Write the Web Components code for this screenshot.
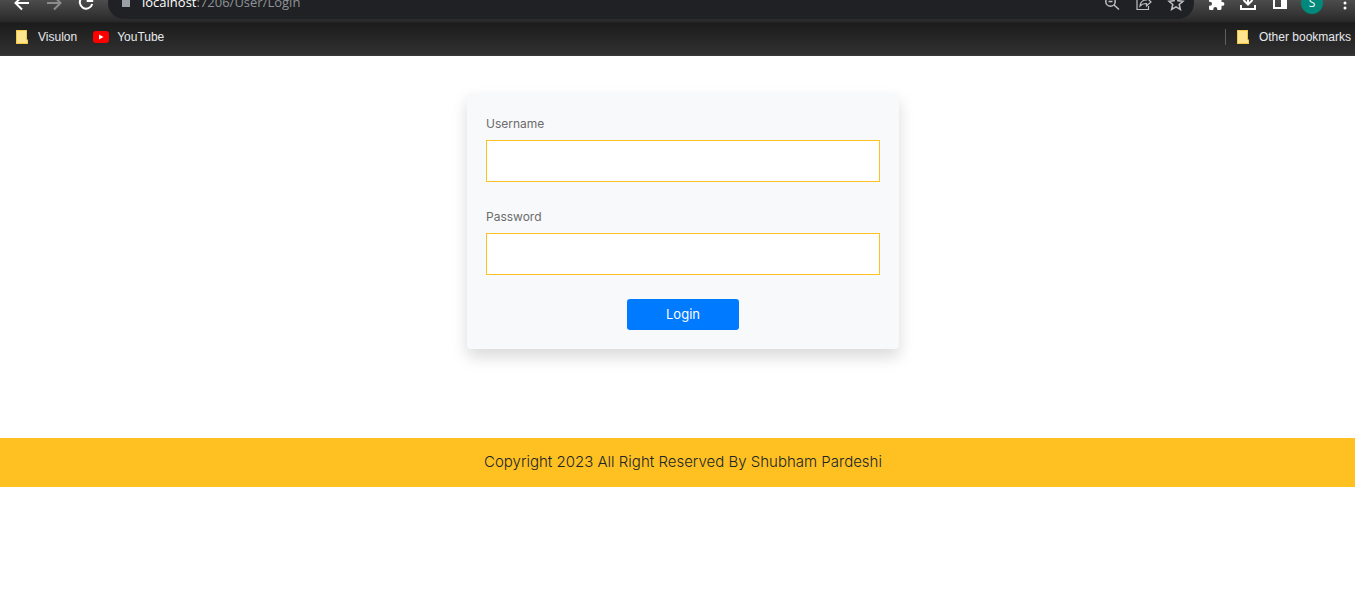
<!DOCTYPE html>
<html lang="en">
<head>
<meta charset="utf-8">
<title>Login</title>
<style>
html, body { margin: 0; background: #fff; }
body { font-family: Inter, "Noto Sans", sans-serif; overflow-x: hidden; }
main { display: flex; justify-content: center; padding: 37px 0 89px 11px; }
</style>
</head>
<body>
<browser-toolbar></browser-toolbar>
<bookmarks-bar>
  <bookmark-item kind="folder">Visulon</bookmark-item>
  <bookmark-item kind="video">YouTube</bookmark-item>
  <bookmark-item kind="folder" slot="end">Other bookmarks</bookmark-item>
</bookmarks-bar>
<main>
  <login-card>
    <form-field label="Username" type="text"></form-field>
    <form-field label="Password" type="password"></form-field>
  </login-card>
</main>
<site-footer>Copyright 2023 All Right Reserved By Shubham Pardeshi</site-footer>

<script>
function define(name, html, setup) {
  const template = document.createElement('template');
  template.innerHTML = html;
  customElements.define(name, class extends HTMLElement {
    constructor() {
      super();
      this.attachShadow({ mode: 'open' }).append(template.content.cloneNode(true));
    }
    connectedCallback() { if (setup) setup(this, this.shadowRoot); }
  });
}

define('browser-toolbar', `
<style>
:host { display: flex; align-items: flex-end; height: 23px; overflow: hidden;
  background: linear-gradient(#4c4c4c, #2a2a2a 21px, #1f1f1f); font-family: "Open Sans", "Noto Sans", sans-serif; }
.row { display: flex; align-items: center; flex: 1; min-width: 0; height: 40px; padding-left: 6px; box-sizing: border-box; }
button { appearance: none; border: 0; padding: 0; margin: 0; background: none; flex: none; width: 32px; height: 32px;
  display: flex; align-items: center; justify-content: center; color: #fff; font: 12px/20px "Open Sans", sans-serif; }
button.dim { color: #8c8c8c; }
button.last { width: 27px; justify-content: flex-end; }
svg { display: block; width: 20px; height: 20px; fill: none; stroke: currentColor; stroke-width: 2; }
.omni { flex: 1; min-width: 0; display: flex; align-items: center; height: 32px; margin: 0 6px; padding: 0 2px 0 14px;
  box-sizing: border-box; border-radius: 16px; background: #202124; }
.omni button { color: #bdc1c6; }
.omni button svg { stroke-width: 1.5; }
.lock { width: 8px; height: 12px; margin-right: 12px; color: #9aa0a6; }
.url { flex: 1; padding-bottom: 2px; font-size: 13px; line-height: 20px; color: #8f9398; white-space: nowrap; }
.url b { font-weight: 400; color: #fff; }
.avatar { width: 22px; height: 22px; border-radius: 50%; background: #00897b; text-align: center; line-height: 22px; }
</style>
<div class="row">
  <button aria-label="Back"><svg viewBox="0 0 20 20"><path d="M17 10H4M10 3.500L3.500 10l6.500 6.500"/></svg></button>
  <button class="dim" aria-label="Forward"><svg viewBox="0 0 20 20"><path d="M3 10h13M10 3.500l6.500 6.500-6.500 6.500"/></svg></button>
  <button aria-label="Reload"><svg viewBox="0 0 20 20"><path d="M15.500 6A6.300 6.300 0 1 0 16.200 11M16.200 2.500V8h-5.500"/></svg></button>
  <div class="omni">
    <svg class="lock" viewBox="0 0 8 12"><path fill="currentColor" stroke="none" d="M0 2h8v8H0z"/></svg>
    <span class="url"><b>localhost</b>:7206/User/Login</span>
    <button aria-label="Zoom"><svg viewBox="0 0 20 20"><circle cx="8.500" cy="8.500" r="4.700"/><path d="M12 12l5 4.500M6.500 8.500h4" /></svg></button>
    <button aria-label="Share"><svg viewBox="0 0 20 20"><path d="M7 4H3v12.500h11.500V13M6 13c.5-4 3-6 6.500-6V4.500L17 9l-4.500 4V10.500C9.500 10.500 7.500 11.300 6 13z" stroke-width="1.200"/></svg></button>
    <button aria-label="Bookmark"><svg viewBox="0 0 20 20"><path d="M10 3l2 4.700 5 .5-3.800 3.300 1.200 5L10 13.900l-4.400 2.600 1.200-5L3 8.200l5-.5z"/></svg></button>
  </div>
  <button aria-label="Extensions"><svg viewBox="0 0 20 20"><path fill="currentColor" stroke="none" d="M16.500 9H15.500V6c0-.8-.7-1.500-1.500-1.500h-3V3.500a1.900 1.900 0 0 0-3.800 0v1H4.500C3.700 4.500 3 5.200 3 6v2.800h1a2 2 0 0 1 0 4H3v2.700c0 .8.700 1.500 1.500 1.500h2.800v-1a2 2 0 0 1 4 0v1H14c.8 0 1.500-.7 1.500-1.500v-2.700h1a1.900 1.900 0 0 0 0-3.800z"/></svg></button>
  <button aria-label="Downloads"><svg viewBox="0 0 20 20"><path d="M10 1v11M5.500 7l4.500 4.500L14.500 7M3 12v4h14v-4"/></svg></button>
  <button aria-label="Side panel"><svg viewBox="0 0 20 20"><path d="M4 3h12v12H4z"/><path fill="currentColor" stroke="none" d="M11 3h5v12h-5z"/></svg></button>
  <button aria-label="Profile"><span class="avatar">S</span></button>
  <button class="last" aria-label="Menu"><svg viewBox="0 0 20 20"><g fill="currentColor" stroke="none"><circle cx="10" cy="5" r="1.500"/><circle cx="10" cy="10" r="1.500"/><circle cx="10" cy="15" r="1.500"/></g></svg></button>
</div>`);

define('bookmarks-bar', `
<style>
:host { display: flex; align-items: center; height: 33px; padding: 0 4px 5px 14px; box-sizing: border-box;
  background: linear-gradient(#1c1c1c, #303030 31px, #3a3a3a); }
nav { display: flex; flex: 1; gap: 16px; }
.end { display: flex; padding-left: 9px; border-left: 1px solid #5f5f5f; height: 16px; align-items: center; }
</style>
<nav aria-label="Bookmarks"><slot></slot></nav>
<div class="end"><slot name="end"></slot></div>`);

define('bookmark-item', `
<style>
:host { display: block; }
a { display: flex; align-items: center; gap: 8px; color: #e8eaed; text-decoration: none; white-space: nowrap;
  font: 12px/20px "Liberation Sans", sans-serif; }
svg { width: 16px; height: 16px; flex: none; display: none; }
:host([kind=folder]) .folder, :host([kind=video]) .video { display: block; }
</style>
<a href="#">
  <svg class="folder" viewBox="0 0 16 16"><path d="M2 1h11v9.500h1V15H2z" fill="#f2c744"/><path d="M3 2h9v12H3z" fill="#ffe48f"/><path d="M12 11h1v3h-1z" fill="#ffe48f"/></svg>
  <svg class="video" viewBox="0 0 16 16"><rect y="2" width="16" height="12" rx="3" fill="#f00"/><path d="M6 5.500v5L10.500 8z" fill="#fff"/></svg>
  <span><slot></slot></span>
</a>`);

define('login-card', `
<style>
:host { display: block; width: 432px; max-width: 100%; box-sizing: border-box; padding: 19px; border-radius: 4px;
  background: #f8f9fa; box-shadow: 0 8px 16px rgba(0,0,0,.15); }
form { display: flex; flex-direction: column; }
.fields { display: flex; flex-direction: column; gap: 23px; }
button { align-self: center; width: 112px; height: 31px; margin-top: 24px; padding: 0; border: 0; border-radius: 3px;
  background: #007bff; color: #fff; font: 13px/21px Inter, sans-serif; }
</style>
<form>
  <div class="fields"><slot></slot></div>
  <button type="button">Login</button>
</form>`);

define('form-field', `
<style>
:host { display: flex; flex-direction: column; gap: 4px; }
label { font-size: 12px; line-height: 24px; color: #6c6c6c; }
input { width: 100%; height: 42px; box-sizing: border-box; padding: 0 12px; margin: 0; border: 1px solid #ffc122;
  border-radius: 0; background: #fff; font: 13px/21px Inter, sans-serif; outline: 0; }
</style>
<label for="control"></label>
<input id="control">`, (host, root) => {
  root.querySelector('label').textContent = host.getAttribute('label');
  root.querySelector('input').type = host.getAttribute('type');
});

define('site-footer', `
<style>
:host { display: block; padding: 12px 0 13px 11px; background: #ffc122; }
p { margin: 0; text-align: center; font-size: 15px; line-height: 24px; font-weight: 300; color: #212529; }
</style>
<p><slot></slot></p>`);
</script>
</body>
</html>
